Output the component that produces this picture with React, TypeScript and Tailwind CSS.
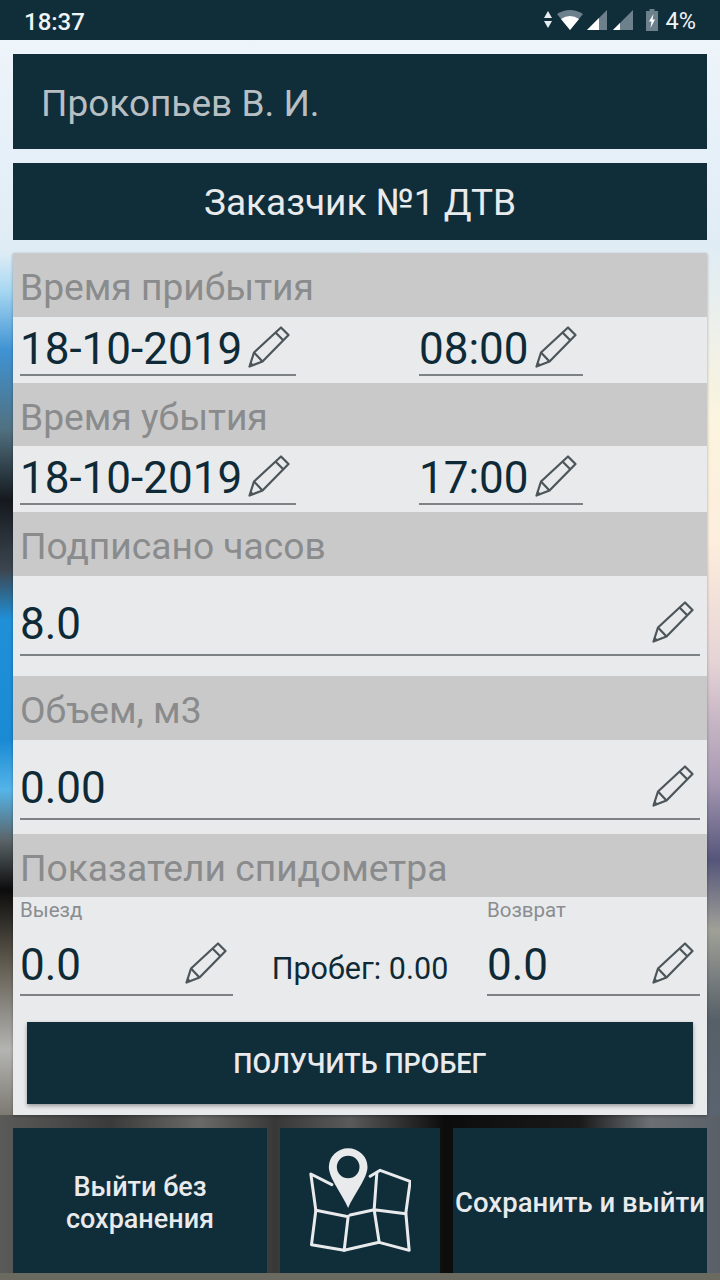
import React from 'react';

const Pencil = () => (
  <svg width="42" height="42" viewBox="0 0 42 42" fill="none" stroke="#4c555a" strokeWidth="2.2" strokeLinejoin="round" className="shrink-0 mb-[4px]">
    <path d="M1.5 40.5 L6 26.5 L33 1.5 L40.5 9 L14.5 35.5 Z" />
    <path d="M6 26.5 L14.5 35.5 M27.5 6.5 L35.5 14.5 M2.5 37 L5 39.5" />
  </svg>
);

const StatusIcons = () => (
  <div className="flex items-center">
    <svg width="8" height="18" viewBox="0 0 8 18" fill="#e8edf0" className="mr-[5px]">
      <path d="M4 0 L8 7 H0 Z M0 10 H8 L4 17 Z" />
    </svg>
    <svg width="26" height="22" viewBox="0 0 26 22" className="mr-[4px]">
      <path d="M0 5 Q13 -3 26 5 L13 21 Z" fill="#6d818c" />
      <path d="M4 10 Q13 4 22 10 L13 21 Z" fill="#ffffff" />
    </svg>
    <svg width="20" height="20" viewBox="0 0 20 20" className="mr-[6px]">
      <path d="M0 20 L20 0 V20 Z" fill="#6d818c" />
      <path d="M0 20 L12 8 V20 Z" fill="#ffffff" />
    </svg>
    <svg width="20" height="20" viewBox="0 0 20 20" className="mr-[13px]">
      <path d="M0 20 L20 0 V20 Z" fill="#6d818c" />
      <path d="M0 20 L7 13 V20 Z" fill="#ffffff" />
    </svg>
    <svg width="12" height="22" viewBox="0 0 12 22" className="mr-[8px]">
      <path d="M3.5 0 H8.5 V2 H12 V22 H0 V2 H3.5 Z" fill="#6d818c" />
      <path d="M7.5 5 L3 12.5 H5.5 L4.5 19 L9 10.5 H6.5 Z" fill="#ffffff" />
    </svg>
  </div>
);

const MapIcon = () => (
  <svg width="102" height="106" viewBox="115 85 305 318" fill="none" stroke="#e8eaec" strokeWidth="9" strokeLinejoin="round" strokeLinecap="round">
    <path d="M183 195 L120 163 L135 272 L122 375 L220 392 L325 368 L415 392 L405 280 L418 185 L328 152 L298 170" />
    <path d="M318 160 L310 270 L325 368 M232 290 L220 392 M135 272 L225 290 M238 286 L310 270 L405 282" />
    <path
      fillRule="evenodd"
      stroke="none"
      fill="#e8eaec"
      d="M232 265 C215 225 174 175 174 142 A58 56 0 0 1 290 142 C290 175 249 225 232 265 Z M232 108 A34 34 0 1 0 232 176 A34 34 0 1 0 232 108 Z"
    />
  </svg>
);

const SectionHeader = ({ title, className }: { title: string; className: string }) => (
  <div className={`bg-[#c9c9c9] pl-[7px] pt-[6px] flex items-center text-[37.2px] text-[#898b8c] ${className}`}>{title}</div>
);

const Field = ({ value, className }: { value: string; className: string }) => (
  <div className={`flex items-center justify-between border-b-2 border-[#7d8285] ${className}`}>
    <span className="text-[44px] leading-[52px] text-[#0f2a37] whitespace-nowrap">{value}</span>
    <Pencil />
  </div>
);

const DateRow = ({ date, time }: { date: string; time: string }) => (
  <div className="h-[66px] flex items-start pl-[7px] pt-[6px]">
    <Field value={date} className="w-[276px] h-[53px] pr-[6px]" />
    <Field value={time} className="w-[164px] h-[53px] ml-[123px] pr-[6px]" />
  </div>
);

const WideRow = ({ value, className }: { value: string; className: string }) => (
  <div className={`px-[7px] pt-[22px] ${className}`}>
    <Field value={value} className="h-[58px] pb-[4px] pr-[6px]" />
  </div>
);

const Odometer = ({ label, value }: { label: string; value: string }) => (
  <div className="w-[213px]">
    <div className="text-[20.5px] leading-[22px] text-[#8a8d90] mt-[2px]">{label}</div>
    <Field value={value} className="h-[70px] mt-[5px] pt-[10px] pr-[6px]" />
  </div>
);

export default function App() {
  return (
    <div
      className="w-[720px] h-[1280px] overflow-hidden flex flex-col font-['Roboto',sans-serif] [background:linear-gradient(#6b6a60,#6b6a60)_0_1273px/720px_7px_no-repeat,linear-gradient(90deg,#5a5a58_0px,#4a4a4a_60px,#3a3a3a_110px,#6a6a68_200px,#383838_275px,#5a5a5a_350px,#0c0c0c_445px,#1a1a1a_580px,#6c7074_650px,#5a6068_720px)_0_1115px/720px_158px_no-repeat,linear-gradient(#f0f6fb_0px,#e6f0f8_150px,#e0ecf5_245px,#dcebf5_255px,#a8d8f2_290px,#3f93d4_350px,#50707f_430px,#15191e_500px,#3c4650_570px,#1f90d8_620px,#1a8ad4_740px,#55b4e8_790px,#5a6468_840px,#0c0c0c_890px,#5c574c_960px,#b4b4b2_1050px,#6f6c62_1130px,#403e38_1210px,#6b6a60_1280px)_left/360px_100%_no-repeat,linear-gradient(#f0f6fb_0px,#e6f0f8_150px,#e0ecf5_245px,#fbf4de_420px,#fdeedd_540px,#e6d4d6_660px,#a89ab4_780px,#55557a_860px,#a0a098_930px,#566068_1020px,#5a6470_1115px,#5a6068_1280px)_right/360px_100%_no-repeat]"
    >
      {/* Status bar */}
      <div className="h-[40px] shrink-0 bg-[#102d3a] flex items-center justify-between pl-[24px] pr-[24px] pt-[3px] text-white">
        <span className="text-[24px] font-medium text-[#f1f4f5]">18:37</span>
        <div className="flex items-center -mt-[3px]">
          <StatusIcons />
          <span className="text-[23.5px] mt-[4px] text-[#f1f4f5]">4%</span>
        </div>
      </div>

      <div className="flex-1 flex flex-col px-[13px] pt-[14px]">
        <div className="h-[95px] bg-[#102d3a] flex items-center pl-[28px] pt-[5px] text-[37px] text-[#b8bfc2]">Прокопьев В. И.</div>
        <div className="h-[77px] mt-[14px] bg-[#102d3a] flex items-center justify-center pt-[3px] text-[37px] text-[#e8eaec]">
          Заказчик №1 ДТВ
        </div>

        <div className="h-[862px] mt-[13px] bg-[#e8eaec] flex flex-col shadow-[0_1px_3px_rgba(0,0,0,0.3)]">
          <SectionHeader title="Время прибытия" className="h-[64px]" />
          <DateRow date="18-10-2019" time="08:00" />
          <SectionHeader title="Время убытия" className="h-[63px]" />
          <DateRow date="18-10-2019" time="17:00" />
          <SectionHeader title="Подписано часов" className="h-[64px]" />
          <WideRow value="8.0" className="h-[100px]" />
          <SectionHeader title="Объем, м3" className="h-[64px]" />
          <WideRow value="0.00" className="h-[94px]" />
          <SectionHeader title="Показатели спидометра" className="h-[63px]" />
          <div className="px-[7px] flex items-start">
            <Odometer label="Выезд" value="0.0" />
            <div className="w-[254px] pt-[50px] text-center text-[30.5px] leading-[44px] text-[#0f2a37]">Пробег: 0.00</div>
            <Odometer label="Возврат" value="0.0" />
          </div>
          <button className="h-[82px] mx-[14px] mt-[26px] bg-[#102d3a] pt-[2px] text-[27px] font-medium text-[#e8eaec] shadow-[0_2px_4px_rgba(0,0,0,0.35)]">
            ПОЛУЧИТЬ ПРОБЕГ
          </button>
        </div>

        <div className="h-[145px] mt-[13px] flex gap-[13px]">
          <button className="w-[254px] bg-[#102d3a] pt-[5px] text-[27px] font-medium leading-[32px] text-[#e8eaec]">
            Выйти без
            <br />
            сохранения
          </button>
          <button className="w-[160px] bg-[#102d3a] flex items-center justify-center">
            <MapIcon />
          </button>
          <button className="w-[254px] bg-[#102d3a] pt-[5px] text-[27.5px] font-medium whitespace-nowrap text-[#e8eaec]">
            Сохранить и выйти
          </button>
        </div>
      </div>
    </div>
  );
}
